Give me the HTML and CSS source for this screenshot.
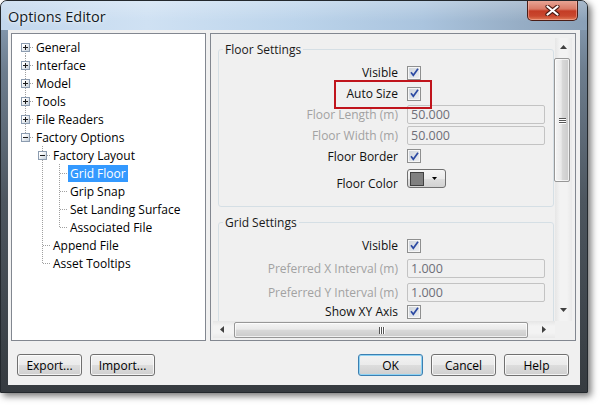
FILE: index.html
```html
<!DOCTYPE html>
<html>
<head>
<meta charset="utf-8">
<title>Options Editor</title>
<link rel="stylesheet" href="styles.css">
</head>
<body>
<div class="window">
  <div class="titlebar">
    <span class="title">Options Editor</span>
    <button class="close" aria-label="Close">
      <svg width="15" height="11" viewBox="0 0 15 11"><path d="M2.5 1.5 L12.5 9.5 M12.5 1.5 L2.5 9.5" stroke="#4a1a12" stroke-width="4.2" stroke-linecap="round"/><path d="M2.5 1.5 L12.5 9.5 M12.5 1.5 L2.5 9.5" stroke="#ffffff" stroke-width="2.2" stroke-linecap="round"/></svg>
    </button>
  </div>
  <div class="frame">
    <div class="client">
      <div class="main">
        <div class="tree">
          <div class="node"><span class="c first"><i class="exp plus"></i></span><span class="t">General</span></div>
          <div class="node"><span class="c tee"><i class="exp plus"></i></span><span class="t">Interface</span></div>
          <div class="node"><span class="c tee"><i class="exp plus"></i></span><span class="t">Model</span></div>
          <div class="node"><span class="c tee"><i class="exp plus"></i></span><span class="t">Tools</span></div>
          <div class="node"><span class="c tee"><i class="exp plus"></i></span><span class="t">File Readers</span></div>
          <div class="node"><span class="c ell"><i class="exp minus"></i></span><span class="t">Factory Options</span></div>
          <div class="node"><span class="c"></span><span class="c tee"><i class="exp minus"></i></span><span class="t">Factory Layout</span></div>
          <div class="node"><span class="c"></span><span class="c bar"></span><span class="c tee"></span><span class="t sel">Grid Floor</span></div>
          <div class="node"><span class="c"></span><span class="c bar"></span><span class="c tee"></span><span class="t">Grip Snap</span></div>
          <div class="node"><span class="c"></span><span class="c bar"></span><span class="c tee"></span><span class="t">Set Landing Surface</span></div>
          <div class="node"><span class="c"></span><span class="c bar"></span><span class="c ell"></span><span class="t">Associated File</span></div>
          <div class="node"><span class="c"></span><span class="c tee"></span><span class="t">Append File</span></div>
          <div class="node"><span class="c"></span><span class="c ell"></span><span class="t">Asset Tooltips</span></div>
        </div>
        <div class="panel">
          <div class="viewport">
            <fieldset class="group">
              <legend>Floor Settings</legend>
              <div class="row"><span class="lbl">Visible</span><span class="cb"><svg width="11" height="11" viewBox="0 0 11 11"><path d="M2 5.3 L4.3 8.3 L9 1.8" fill="none" stroke="#2c4aa3" stroke-width="1.7"/></svg></span></div>
              <div class="row marked"><span class="lbl">Auto Size</span><span class="cb"><svg width="11" height="11" viewBox="0 0 11 11"><path d="M2 5.3 L4.3 8.3 L9 1.8" fill="none" stroke="#2c4aa3" stroke-width="1.7"/></svg></span></div>
              <div class="row"><span class="lbl off">Floor Length (m)</span><span class="input">50.000</span></div>
              <div class="row"><span class="lbl off">Floor Width (m)</span><span class="input">50.000</span></div>
              <div class="row row-border"><span class="lbl">Floor Border</span><span class="cb"><svg width="11" height="11" viewBox="0 0 11 11"><path d="M2 5.3 L4.3 8.3 L9 1.8" fill="none" stroke="#2c4aa3" stroke-width="1.7"/></svg></span></div>
              <div class="row row-color"><span class="lbl">Floor Color</span><span class="picker"><span class="swatch"></span><svg width="5" height="3" viewBox="0 0 5 3"><path d="M0 0 H5 L2.5 3Z" fill="#000"/></svg></span></div>
            </fieldset>
            <fieldset class="group grid">
              <legend>Grid Settings</legend>
              <div class="row"><span class="lbl">Visible</span><span class="cb"><svg width="11" height="11" viewBox="0 0 11 11"><path d="M2 5.3 L4.3 8.3 L9 1.8" fill="none" stroke="#2c4aa3" stroke-width="1.7"/></svg></span></div>
              <div class="row row-gx"><span class="lbl off">Preferred X Interval (m)</span><span class="input">1.000</span></div>
              <div class="row row-gy"><span class="lbl off">Preferred Y Interval (m)</span><span class="input">1.000</span></div>
              <div class="row row-axis"><span class="lbl">Show XY Axis</span><span class="cb"><svg width="11" height="11" viewBox="0 0 11 11"><path d="M2 5.3 L4.3 8.3 L9 1.8" fill="none" stroke="#2c4aa3" stroke-width="1.7"/></svg></span></div>
            </fieldset>
          </div>
          <div class="vscroll">
            <span class="sbtn"><svg width="7" height="4" viewBox="0 0 7 4"><path d="M3.5 0 L7 4 H0Z" fill="#404040"/></svg></span>
            <div class="vtrack"><span class="vthumb"><i></i><i></i><i></i></span></div>
            <span class="sbtn"><svg width="7" height="4" viewBox="0 0 7 4"><path d="M0 0 H7 L3.5 4Z" fill="#404040"/></svg></span>
          </div>
          <div class="hscroll">
            <span class="sbtn"><svg width="4" height="7" viewBox="0 0 4 7"><path d="M0 3.5 L4 0 V7Z" fill="#404040"/></svg></span>
            <div class="htrack"><span class="hthumb"><i></i><i></i><i></i></span></div>
            <span class="sbtn"><svg width="4" height="7" viewBox="0 0 4 7"><path d="M4 3.5 L0 0 V7Z" fill="#404040"/></svg></span>
          </div>
          <div class="corner"></div>
        </div>
      </div>
      <div class="buttons">
        <div class="bgroup">
          <button class="btn">Export...</button>
          <button class="btn">Import...</button>
        </div>
        <div class="bgroup">
          <button class="btn default">OK</button>
          <button class="btn">Cancel</button>
          <button class="btn">Help</button>
        </div>
      </div>
    </div>
  </div>
</div>
</body>
</html>
```
FILE: styles.css
```css
* { box-sizing: border-box; }
html, body { margin: 0; padding: 0; background: #ffffff; }
body {
  width: 600px; height: 410px; overflow: hidden;
  font-family: "Open Sans", "Noto Sans", sans-serif;
  font-size: 12px; color: #000;
}

.window {
  width: 588px; height: 393px;
  display: flex; flex-direction: column;
  border: 1px solid #23282d;
  border-radius: 7px 7px 0 0;
  overflow: hidden;
  background: linear-gradient(to bottom, #8ea5bd 0px, #6d7d8e 70px, #4d565f 200px, #363b40 100%);
  box-shadow: 3px 3px 7px rgba(0,0,0,0.55);
}

.titlebar {
  height: 29px; flex: none;
  display: flex; justify-content: space-between; align-items: flex-start;
  background:
    linear-gradient(to bottom, rgba(255,255,255,0.25), rgba(255,255,255,0) 70%),
    linear-gradient(to right, #c2d7ed 0%, #cfe1f3 25%, #bcd4eb 50%, #aac4de 72%, #97aec6 88%, #8aa0b7 100%);
}
.title {
  padding: 7px 0 0 7px;
  font-size: 14.5px; line-height: 18px; color: #121a24;
  text-shadow: 0 0 6px rgba(255,255,255,0.9), 0 0 2px rgba(255,255,255,0.8);
}
.close {
  width: 51px; height: 21px; margin: -1px 9px 0 0; padding: 0;
  display: flex; align-items: center; justify-content: center;
  border: 1px solid #4a1d16; border-top: none;
  border-radius: 0 0 5px 5px;
  background: linear-gradient(to bottom, #e9a99a 0%, #d97a66 45%, #c43c25 55%, #c9472e 80%, #e07a55 100%);
  box-shadow: inset 0 0 0 1px rgba(255,200,190,0.45);
}

.frame { flex: 1; padding: 0 7px 7px 7px; display: flex; }
.client {
  flex: 1; display: flex; flex-direction: column;
  background: #f0f0f0;
  padding: 3px 4px 9px 3px;
}
.main { display: flex; gap: 4px; }

/* ---------- tree ---------- */
.tree {
  width: 195px; height: 308px;
  border: 1px solid #828790;
  background: #fff;
  padding: 4px 0 0 5px;
}
.node { display: flex; height: 18px; align-items: center; }
.c {
  width: 17px; height: 18px; flex: none;
  background-repeat: no-repeat;
}
.c.tee {
  background-image:
    repeating-linear-gradient(to right, #a0a0a0 0 1px, transparent 1px 2px),
    repeating-linear-gradient(to bottom, #a0a0a0 0 1px, transparent 1px 2px);
  background-position: 9px 9px, 8px 0;
  background-size: 8px 1px, 1px 18px;
}
.c.ell {
  background-image:
    repeating-linear-gradient(to right, #a0a0a0 0 1px, transparent 1px 2px),
    repeating-linear-gradient(to bottom, #a0a0a0 0 1px, transparent 1px 2px);
  background-position: 9px 9px, 8px 0;
  background-size: 8px 1px, 1px 9px;
}
.c.first {
  background-image:
    repeating-linear-gradient(to right, #a0a0a0 0 1px, transparent 1px 2px),
    repeating-linear-gradient(to bottom, #a0a0a0 0 1px, transparent 1px 2px);
  background-position: 9px 9px, 8px 9px;
  background-size: 8px 1px, 1px 9px;
}
.c.bar {
  background-image: repeating-linear-gradient(to bottom, #a0a0a0 0 1px, transparent 1px 2px);
  background-position: 8px 0;
  background-size: 1px 18px;
}
.exp {
  display: block; width: 9px; height: 9px; margin: 5px 0 0 4px;
  border: 1px solid #8c9cb0;
  background-repeat: no-repeat;
}
.exp.plus {
  background-image:
    linear-gradient(#1c1c1c, #1c1c1c),
    linear-gradient(#1c1c1c, #1c1c1c),
    linear-gradient(135deg, #ffffff 20%, #c6d0da 100%);
  background-position: 1px 3px, 3px 1px, 0 0;
  background-size: 5px 1px, 1px 5px, 100% 100%;
}
.exp.minus {
  background-image:
    linear-gradient(#1c1c1c, #1c1c1c),
    linear-gradient(135deg, #ffffff 20%, #c6d0da 100%);
  background-position: 1px 3px, 0 0;
  background-size: 5px 1px, 100% 100%;
}
.t { line-height: 17px; padding: 0 2px; white-space: nowrap; }
.t.sel { background: #3399ff; color: #fff; }

/* ---------- panel ---------- */
.panel {
  width: 366px; height: 308px;
  border: 1px solid #828790;
  background: #f0f0f0;
  padding: 4px 3px 2px 2px;
  display: grid;
  grid-template-columns: 342px 17px;
  grid-template-rows: 283px 17px;
}
.viewport { overflow: hidden; padding-left: 5px; }
.group {
  width: 336px; margin: 4px 0 0 0;
  border: 1px solid #d5dfe5;
  border-radius: 3px;
  padding: 5px 0 6px 4px;
  min-width: 0;
}
.group.grid { margin-top: 8px; }
.group legend {
  padding: 0 2px; line-height: 15px; color: #1a1a1a;
}
.row {
  display: grid;
  grid-template-columns: 175px 138px;
  column-gap: 9px;
  align-items: center;
  height: 21px;
}
.row-border { height: 20px; }
.row-color { height: 34px; }
.row-gx { height: 25px; }
.row-gy { height: 23px; }
.row-axis { height: 14px; }
.lbl { justify-self: end; line-height: 15px; white-space: nowrap; color: #111; }
.lbl.off { color: #a2a2a2; }
.marked { position: relative; }
.marked::after {
  content: ""; position: absolute;
  left: 111px; top: -3px; width: 94px; height: 25px;
  border: 2px solid #c0141c;
}
.cb {
  width: 14px; height: 14px;
  border: 1px solid #8e8f8f;
  background: linear-gradient(135deg, #cdd3da 0%, #eef0f3 100%);
  box-shadow: inset 0 0 0 1px #f6f6f6;
  display: flex; align-items: center; justify-content: center;
}
.cb svg { display: block; }
.input {
  height: 19px; width: 138px;
  border: 1px solid #c3c3c3;
  border-radius: 2px;
  background: #f0f0f0;
  color: #6e6e78;
  font-size: 12.5px;
  line-height: 17px;
  padding-left: 3px;
}
.picker {
  align-self: start; margin-top: 3px;
  width: 39px; height: 19px;
  border: 1px solid #707070; border-radius: 3px;
  background: linear-gradient(to bottom, #f5f5f5 0%, #ebebeb 50%, #dedede 51%, #d2d2d2 100%);
  display: flex; align-items: center; gap: 8px;
  padding-left: 2px;
}
.swatch {
  width: 14px; height: 14px;
  background: #808080;
  border: 1px solid #404040;
}

/* scrollbars */
.vscroll, .hscroll { display: flex; background: linear-gradient(to right, #e6e6e6, #f3f3f3 30%, #f3f3f3 70%, #e9e9e9); }
.vscroll { flex-direction: column; padding-bottom: 3px; }
.hscroll { padding-right: 3px; background: linear-gradient(to bottom, #e6e6e6, #f3f3f3 30%, #f3f3f3 70%, #e9e9e9); }
.sbtn { width: 17px; height: 17px; flex: none; display: flex; align-items: center; justify-content: center; }
.vtrack { flex: 1; padding: 3px 1px 0 0; }
.htrack { flex: 1; padding: 0 0 0 4px; }
.vthumb {
  display: flex; flex-direction: column; align-items: center; justify-content: center; gap: 1px;
  width: 16px; height: 124px; margin-left: -1px;
  border: 1px solid #979797; border-radius: 2px;
  background: linear-gradient(to right, #f4f4f4 0%, #e9e9e9 45%, #d9d9d9 50%, #cbcbcb 100%);
  box-shadow: inset 0 0 0 1px rgba(255,255,255,0.7);
}
.vthumb i { display: block; width: 7px; height: 1px; background: #555; box-shadow: 0 1px 0 #fff; }
.hthumb {
  display: flex; align-items: center; justify-content: center; gap: 1px;
  width: 294px; height: 16px; margin-top: 1px;
  border: 1px solid #979797; border-radius: 2px;
  background: linear-gradient(to bottom, #f4f4f4 0%, #e9e9e9 45%, #d9d9d9 50%, #cbcbcb 100%);
  box-shadow: inset 0 0 0 1px rgba(255,255,255,0.7);
}
.hthumb i { display: block; width: 1px; height: 7px; background: #555; box-shadow: 1px 0 0 #fff; }
.corner { background: #f0f0f0; }

/* buttons */
.buttons {
  display: flex; justify-content: space-between;
  margin-top: 13px; padding: 0 7px 0 6px;
}
.bgroup { display: flex; gap: 8px; }
.btn {
  width: 65px; height: 22px; padding: 0;
  font-family: inherit; font-size: 12px; color: #000;
  border: 1px solid #707070; border-radius: 3px;
  background: linear-gradient(to bottom, #f2f2f2 0%, #ebebeb 50%, #dddddd 51%, #cfcfcf 100%);
  box-shadow: inset 0 0 0 1px rgba(255,255,255,0.75);
}
.btn.default {
  border-color: #3c7fb1;
  box-shadow: inset 0 0 0 1px #8fd3f4;
}
```
